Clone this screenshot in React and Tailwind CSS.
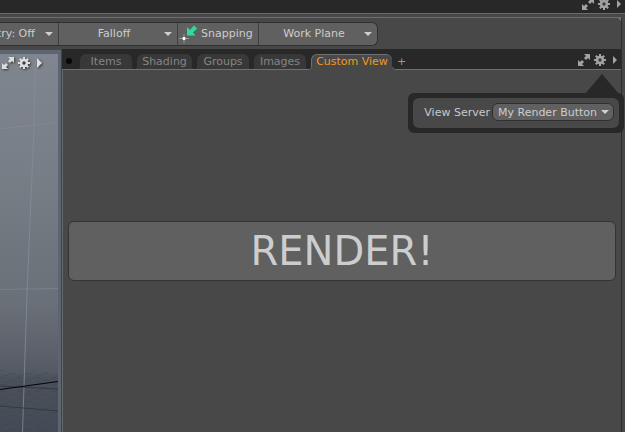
import React from 'react';

function ExpandIcon() {
  return (
    <svg className="h-3 w-3" viewBox="0 0 12 12" fill="currentColor" aria-hidden="true">
      <path d="M6 0h6v6L10 4 8 6 6 4l2-2zM0 6l2 2 2-2 2 2-2 2 2 2H0z" />
    </svg>
  );
}

function GearIcon() {
  return (
    <svg className="h-3 w-3" viewBox="0 0 12 12" aria-hidden="true">
      <g stroke="currentColor" strokeWidth="2">
        <path d="M6 0v12M0 6h12M1.8 1.8l8.4 8.4M10.2 1.8l-8.4 8.4" />
      </g>
      <circle cx="6" cy="6" r="4.2" fill="currentColor" />
      <circle cx="6" cy="6" r="1.7" fill="#3c3c3c" />
    </svg>
  );
}

function PlayIcon({ className }) {
  return (
    <svg className={className} viewBox="0 0 4 8" preserveAspectRatio="none" fill="currentColor" aria-hidden="true">
      <path d="M0 0l4 4-4 4z" />
    </svg>
  );
}

function PanelControls({ name, className, arrowSize = 'h-2 w-1' }) {
  return (
    <div className={`flex items-center ${className}`}>
      <button type="button" aria-label={`Maximize ${name}`} className="mr-1">
        <ExpandIcon />
      </button>
      <button type="button" aria-label={`${name} options`} className="mr-[7px]">
        <GearIcon />
      </button>
      <button type="button" aria-label={`More ${name}`}>
        <PlayIcon className={arrowSize} />
      </button>
    </div>
  );
}

function DropArrow({ className }) {
  return (
    <svg
      className={`pointer-events-none absolute top-1/2 h-1 w-2 -translate-y-1/2 ${className}`}
      viewBox="0 0 8 4"
      fill="#d0d0d0"
      aria-hidden="true"
    >
      <path d="M0 0h8L4 4z" />
    </svg>
  );
}

function ToolSelect({ label, value, width = 'w-[119px]', className = 'border-r' }) {
  return (
    <div className={`relative h-full shrink-0 border-[#404040] ${width} ${className}`}>
      <select
        aria-label={label}
        defaultValue={value}
        className="h-full w-full appearance-none pr-2 pb-px text-center outline-none [text-align-last:center]"
      >
        <option>{value}</option>
      </select>
      <DropArrow className="right-[5px]" />
    </div>
  );
}

function SnapIcon() {
  return (
    <svg className="h-[18px] w-[18px]" viewBox="0 0 18 18" aria-hidden="true">
      <path d="M15 0.500L18 3.500 14 7.500l2.500 3H8V2l3 3z" fill="#2fdc97" />
      <path d="M5 9v9M0 13.500h10" stroke="#999" strokeWidth="1" />
      <path d="M5 12v3M3.500 13.500h3" stroke="#fff" strokeWidth="2" />
    </svg>
  );
}

function Toolbar() {
  return (
    <div className="relative mt-[3px] mr-[3px] flex h-8 border-t border-r border-t-[#6e6e6e] border-r-[#2c2c2c] pt-1">
      <div className="flex h-6 overflow-hidden rounded-r-md border border-l-0 border-[#303030] bg-[#606060]">
        <div className="flex w-[59px] justify-end overflow-hidden">
          <ToolSelect label="Symmetry" value="Symmetry: Off" />
        </div>
        <ToolSelect label="Falloff" value="Falloff" />
        <button type="button" className="flex w-[81px] items-center gap-1 border-r border-[#404040] pb-px pl-px">
          <SnapIcon />
          Snapping
        </button>
        <ToolSelect label="Work Plane" value="Work Plane" width="w-[118px]" className="" />
      </div>
      <svg className="absolute top-0 right-0 h-[3px] w-[3px]" viewBox="0 0 3 3" fill="#777" aria-hidden="true">
        <path d="M0 0h3v3z" />
      </svg>
    </div>
  );
}

function Viewport() {
  return (
    <section
      aria-label="3D viewport"
      className="relative mt-px w-[61px] shrink-0 border-t-4 border-r-[3px] border-[#5b6672]"
    >
      <svg className="absolute inset-0 h-full w-full" viewBox="0 0 58 378" preserveAspectRatio="none" aria-hidden="true">
        <defs>
          <linearGradient id="sky" x1="0" y1="0" x2="0" y2="1">
            <stop offset="0" stopColor="#80868f" />
            <stop offset="0.350" stopColor="#777d85" />
            <stop offset="0.670" stopColor="#696f77" />
            <stop offset="0.760" stopColor="#5f646d" />
            <stop offset="0.840" stopColor="#545a63" />
            <stop offset="0.860" stopColor="#4a515a" />
            <stop offset="1" stopColor="#444b56" />
          </linearGradient>
          <pattern id="ground" width="17" height="7" patternUnits="userSpaceOnUse">
            <path d="M0 1.500h6M8 4.500h7M3 6.500h5" stroke="#3d444e" strokeWidth="1" />
          </pattern>
        </defs>
        <rect width="58" height="378" fill="url(#sky)" />
        <path d="M0 316l58 4v58H0z" fill="url(#ground)" opacity="0.400" />
        <path d="M0 75L58 68M0 235.500L58 234.500" stroke="#8b919d" strokeWidth="1" fill="none" opacity="0.450" />
        <path d="M35.500 0L34 72L27 240L22.500 378" stroke="#858c9a" strokeWidth="1" fill="none" opacity="0.800" />
        <path d="M0 332L58 335M0 352L58 357" stroke="#343a43" strokeWidth="1" />
        <path d="M0 335.500L58 327.500" stroke="#050505" strokeWidth="1.200" />
      </svg>
      <PanelControls
        name="viewport"
        arrowSize="h-[10px] w-[5px]"
        className="relative mt-[3px] ml-[2px] text-[#dedede] drop-shadow-[1px_1px_1px_#333]"
      />
    </section>
  );
}

const tabs = [
  { name: 'Items', width: 'w-[52px]' },
  { name: 'Shading', width: 'w-[55px]' },
  { name: 'Groups', width: 'w-[52px]' },
  { name: 'Images', width: 'w-[52px]' },
  { name: 'Custom View', width: 'w-[81px]', active: true },
];

const flare =
  "relative rounded-t-md before:absolute before:bottom-0 before:-left-[3px] before:h-[3px] before:w-[3px] before:content-[''] after:absolute after:-right-[3px] after:bottom-0 after:h-[3px] after:w-[3px] after:content-['']";
const idleTab =
  'h-[15px] bg-[#383838] text-[#858585] before:bg-[radial-gradient(circle_at_0_0,transparent_3px,#383838_3px)] after:bg-[radial-gradient(circle_at_100%_0,transparent_3px,#383838_3px)]';
const activeTab =
  '-mb-px h-4 border-t border-l border-[#707070] bg-[#484848] pb-[2px] text-[#f09a1c] before:bg-[radial-gradient(circle_at_0_0,transparent_2px,#707070_2px,#484848_3px)] after:bg-[radial-gradient(circle_at_100%_0,transparent_2px,#707070_2px,#484848_3px)]';

function TabBar() {
  return (
    <div className="flex h-[21px] items-end border-b border-[#707070] bg-[#282828]">
      <span className="mr-2 mb-[5px] ml-1 h-[6px] w-[6px] rounded-full bg-[#080808]" />
      <div role="tablist" className="flex items-end gap-[5px]">
        {tabs.map((tab) => (
          <button
            key={tab.name}
            type="button"
            role="tab"
            aria-selected={Boolean(tab.active)}
            className={`${flare} ${tab.width} flex items-center justify-center whitespace-nowrap ${tab.active ? activeTab : idleTab}`}
          >
            {tab.name}
          </button>
        ))}
      </div>
      <button type="button" aria-label="Add tab" className="ml-[5px] h-4 text-[#999]">
        +
      </button>
      <PanelControls name="panel" className="mr-1 mb-[3px] ml-auto text-[#a3a3a3]" />
    </div>
  );
}

function ViewOptions() {
  return (
    <div className="absolute top-[44px] right-px flex h-10 w-[216px] rounded-md border-[5px] border-[#282828] bg-[#282828]">
      <svg className="absolute right-0 bottom-full mb-1 h-5 w-[34px]" viewBox="0 0 34 20" fill="#282828" aria-hidden="true">
        <path d="M17 0l17 20H0z" />
      </svg>
      <div className="flex h-full w-full items-start justify-end rounded-md bg-[#484848] pt-[5px] pr-[5px]">
        <label htmlFor="view-server" className="mt-[3px] mr-[2px] whitespace-nowrap text-[#c8c8c8]">
          View Server
        </label>
        <div className="relative">
          <select
            id="view-server"
            defaultValue="My Render Button"
            className="block h-[18px] w-[122px] appearance-none rounded-md border border-[#303030] bg-[#606060] pt-px pl-[5px] outline-none"
          >
            <option>My Render Button</option>
          </select>
          <DropArrow className="right-[5px]" />
        </div>
      </div>
    </div>
  );
}

export default function App() {
  return (
    <div className="flex min-h-screen flex-col overflow-hidden bg-[#484848] font-['DejaVu_Sans',sans-serif] text-[11px] leading-[13px] text-[#cdcdcd]">
      <header className="flex h-[14px] items-start justify-end overflow-hidden border-b border-[#6b6b6b] bg-[#282828] text-[#a3a3a3]">
        <PanelControls name="window" className="-mt-[2px] mr-1" />
      </header>
      <Toolbar />
      <main className="relative flex flex-1">
        <Viewport />
        <section className="mr-[3px] flex min-w-0 flex-1 flex-col border-r border-l border-r-[#2c2c2c] border-l-[#3a4551]">
          <TabBar />
          <div className="flex-1 border-l border-[#686868] px-[5px] pt-[151px]">
            <button
              type="button"
              className="h-[60px] w-full rounded-md border border-[#343434] bg-[#606060] text-[40px] leading-[56px] text-[#cdcdcd]"
            >
              RENDER!
            </button>
          </div>
        </section>
        <ViewOptions />
      </main>
    </div>
  );
}
